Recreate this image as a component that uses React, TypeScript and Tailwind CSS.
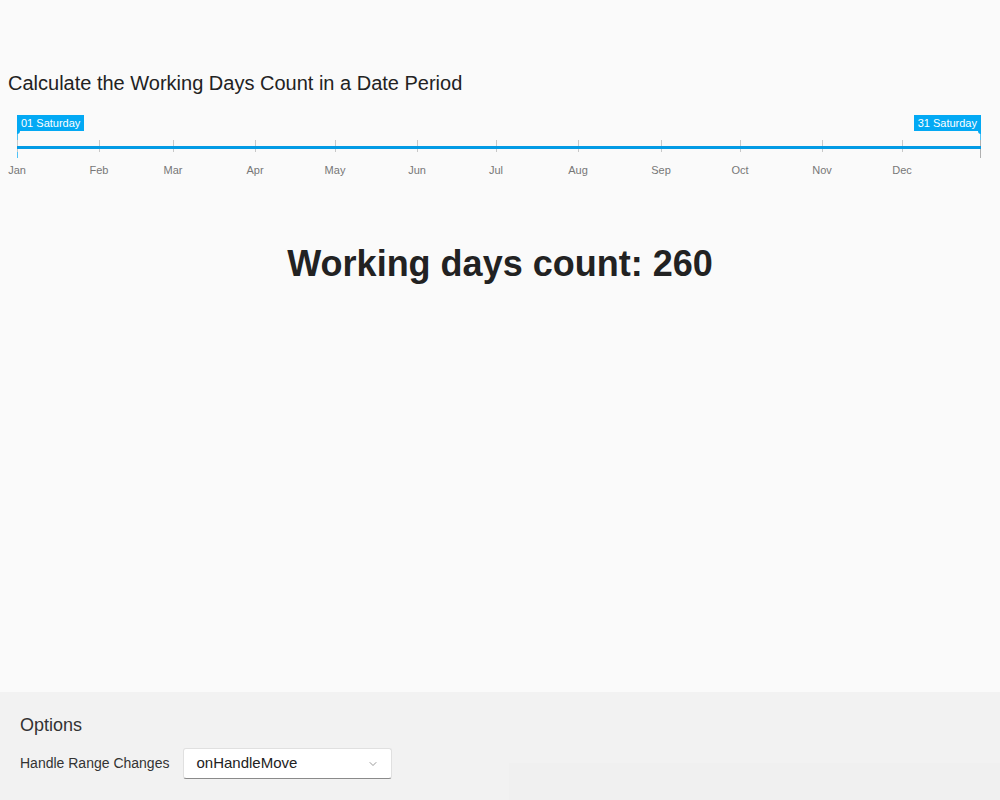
import { ChevronDown } from "lucide-react"

const months = ["Jan", "Feb", "Mar", "Apr", "May", "Jun", "Jul", "Aug", "Sep", "Oct", "Nov", "Dec"]
const monthDays = [31, 28, 31, 30, 31, 30, 31, 31, 30, 31, 30, 31]

// day offset of each month start (Jan 1 .. Dec 31 spans 364 days)
const monthStarts = monthDays.reduce<number[]>((acc, d, i) => {
  acc.push(i === 0 ? 0 : acc[i - 1] + monthDays[i - 1])
  return acc
}, [])

const toX = (day: number) => Math.round((day / 364) * 964)

function RangeTimeline() {
  return (
    <div className="relative h-[66px] w-[964px] ml-[17px] mt-[20px]">
      {/* start handle */}
      <div className="absolute left-0 top-0 h-4 px-1 bg-[#03a9f4] text-white text-[11px] leading-4 whitespace-nowrap">
        01 Saturday
      </div>
      <div className="absolute left-0 top-4 h-[27px] w-px bg-[#4fc3f7]" />
      <div className="absolute left-0 top-4 h-[3px] w-[3px] bg-[#03a9f4] rounded-br-[3px]" />

      {/* end handle */}
      <div className="absolute right-0 top-0 h-4 px-1 bg-[#03a9f4] text-white text-[11px] leading-4 whitespace-nowrap">
        31 Saturday
      </div>
      <div className="absolute right-0 top-4 h-[27px] w-px bg-[#4fc3f7]" />
      <div className="absolute right-0 top-4 h-[3px] w-[3px] bg-[#03a9f4] rounded-bl-[3px]" />

      {/* ticks */}
      {monthStarts.map((start, i) => (
        <div
          key={months[i]}
          className="absolute top-[25px] h-3 w-px bg-[#c8c8c8]"
          style={{ left: toX(start) }}
        />
      ))}
      <div className="absolute right-0 top-[25px] h-[18px] w-px bg-[#b0b0b0]" />

      {/* track */}
      <div className="absolute left-0 right-0 top-[31px] h-[3px] bg-[#039be5]" />

      {/* month labels */}
      {monthStarts.map((start, i) => (
        <div
          key={months[i] + "-label"}
          className="absolute top-[48px] w-10 -ml-5 text-center text-[11px] leading-[14px] text-[#777]"
          style={{ left: toX(start) }}
        >
          {months[i]}
        </div>
      ))}
    </div>
  )
}

export default function App() {
  return (
    <div className="h-[800px] flex flex-col bg-[#fafafa] text-[#222] font-['Liberation_Sans',Arial,sans-serif]">
      <main className="flex-1">
        <h2 className="mt-[72px] ml-2 text-[20px] leading-[23px]">Calculate the Working Days Count in a Date Period</h2>

        <RangeTimeline />

        <div className="mt-[62px] text-center text-[36px] leading-[41px] font-bold">Working days count: 260</div>
      </main>

      <section className="h-[108px] flex bg-[#f2f2f2]">
        <div className="w-[509px] pl-5 pt-[23px]">
          <h3 className="text-[18px] leading-[21px] text-[#333]">Options</h3>
          <div className="mt-[12px] flex items-center gap-[14px]">
            <span className="text-[14px] text-[#333]">Handle Range Changes</span>
            <div className="w-[209px] h-[31px] flex items-center justify-between pl-3 pr-3 bg-white rounded-[3px] border border-[#e0e0e0] border-b-[#8a8a8a] text-[15px] text-[#222]">
              <span>onHandleMove</span>
              <ChevronDown className="w-3 h-3 text-[#777]" strokeWidth={1.5} />
            </div>
          </div>
        </div>
        <div className="flex-1 flex flex-col pt-[71px]">
          <div className="flex-1 bg-[#f0f0f0]" />
        </div>
      </section>
    </div>
  )
}
